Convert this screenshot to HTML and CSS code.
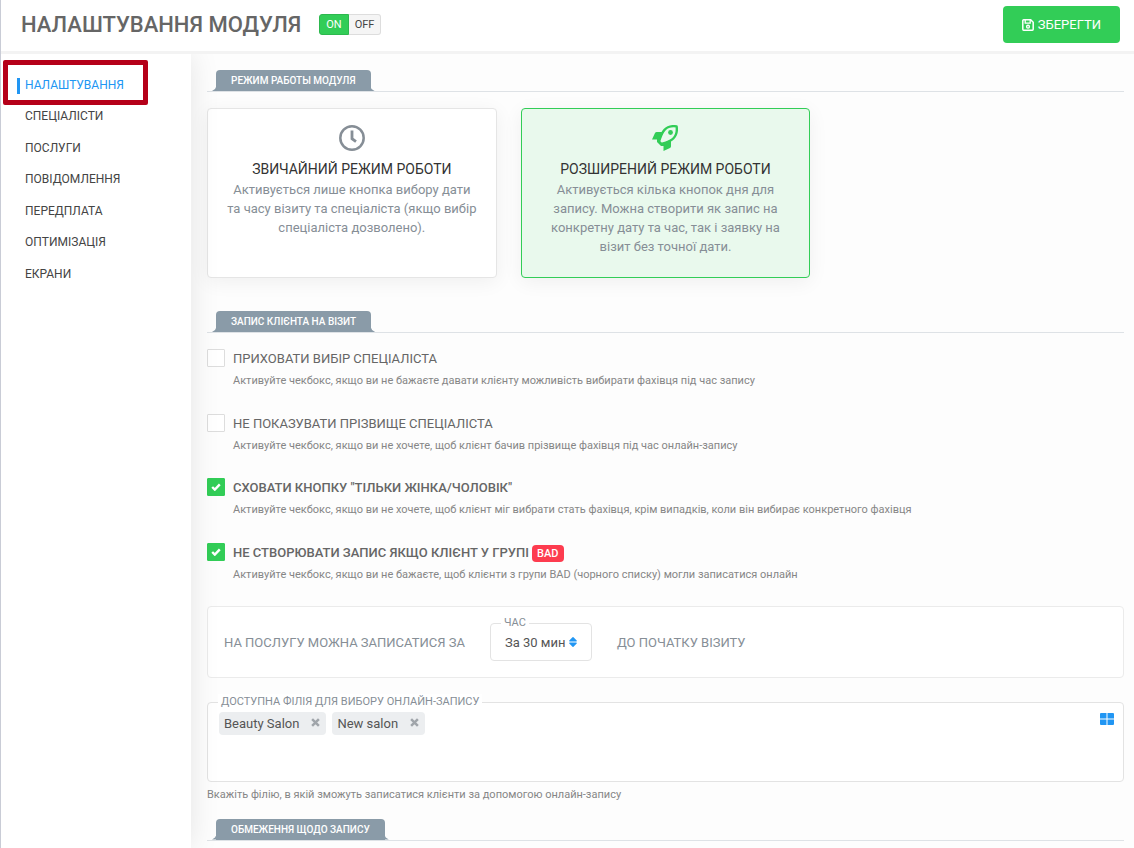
FILE: index.html
```html
<!DOCTYPE html>
<html lang="uk">

<head>
    <meta charset="UTF-8">
    <title>Налаштування модуля</title>
    <link rel="stylesheet" href="styles.css">
</head>

<body>
    <header class="header">
        <h1 class="header-title">НАЛАШТУВАННЯ МОДУЛЯ</h1>
        <div class="toggle">
            <button type="button" class="toggle-on" aria-pressed="true">ON</button>
            <button type="button" class="toggle-off" aria-pressed="false">OFF</button>
        </div>
        <button type="button" class="save">
            <svg class="save-icon" viewBox="0 0 12 12" aria-hidden="true">
                <path d="M1.7 .8h7l2.5 2.5v7a.9.9 0 0 1-.9.9H1.7a.9.9 0 0 1-.9-.9V1.7a.9.9 0 0 1 .9-.9z" fill="none" stroke="currentColor" stroke-width="1.5" />
                <path d="M3.2 1v3.2h5V1" fill="none" stroke="currentColor" stroke-width="1.3" />
                <circle cx="6" cy="7.7" r="1.4" fill="none" stroke="currentColor" stroke-width="1.4" />
            </svg>
            ЗБЕРЕГТИ
        </button>
    </header>

    <div class="layout">
        <!-- Side menu -->
        <nav class="menu">
            <a class="menu-link active" href="#settings">НАЛАШТУВАННЯ</a>
            <a class="menu-link" href="#specialists">СПЕЦІАЛІСТИ</a>
            <a class="menu-link" href="#services">ПОСЛУГИ</a>
            <a class="menu-link" href="#notifications">ПОВІДОМЛЕННЯ</a>
            <a class="menu-link" href="#prepayment">ПЕРЕДПЛАТА</a>
            <a class="menu-link" href="#optimization">ОПТИМІЗАЦІЯ</a>
            <a class="menu-link" href="#screens">ЕКРАНИ</a>
        </nav>

        <main class="content">
            <!-- Module mode -->
            <div class="section-head">
                <h2 class="section-title">РЕЖИМ РАБОТЫ МОДУЛЯ</h2>
            </div>
            <div class="modes">
                <label class="mode">
                    <input type="radio" class="mode-input" name="mode">
                    <svg class="mode-icon" viewBox="0 0 26 26" aria-hidden="true">
                        <circle cx="13" cy="13" r="11.7" fill="none" stroke="currentColor" stroke-width="2.5" />
                        <path d="M13 5.5v8.2l4 3" fill="none" stroke="currentColor" stroke-width="2.8" />
                    </svg>
                    <span class="mode-title">ЗВИЧАЙНИЙ РЕЖИМ РОБОТИ</span>
                    <span class="mode-text">Активується лише кнопка вибору дати та часу візиту та спеціаліста (якщо вибір спеціаліста дозволено).</span>
                </label>
                <label class="mode selected">
                    <input type="radio" class="mode-input" name="mode" checked>
                    <svg class="mode-icon" viewBox="0 0 26 26" aria-hidden="true">
                        <path d="M24.6 1.4C19.5.6 15.7 1.5 12.500 4.800C9.600 7.800 8.500 11.500 7 16.500l2.500 2.500C14.500 17.500 18.300 16.500 21.300 13.500C24.500 10.300 25.400 6.500 24.600 1.400z" fill="none" stroke="currentColor" stroke-width="2.4" stroke-linejoin="round" />
                        <circle cx="18.5" cy="7.5" r="2.4" fill="currentColor" />
                        <path d="M11.500 7H4.800a2 2 0 0 0-1.800 1L0 14.500h5V17l4 4h2.500V26l6.500-3a2 2 0 0 0 1-1.800V14.500L10 18.500 7.500 16z" fill="currentColor" />
                    </svg>
                    <span class="mode-title">РОЗШИРЕНИЙ РЕЖИМ РОБОТИ</span>
                    <span class="mode-text">Активується кілька кнопок дня для запису. Можна створити як запис на конкретну дату та час, так і заявку на візит без точної дати.</span>
                </label>
            </div>

            <!-- Client booking -->
            <div class="section-head">
                <h2 class="section-title">ЗАПИС КЛІЄНТА НА ВІЗИТ</h2>
            </div>
            <div class="checks">
                <div class="check">
                    <input type="checkbox" class="check-input" id="hideSpecialist">
                    <label class="check-label" for="hideSpecialist">ПРИХОВАТИ ВИБІР СПЕЦІАЛІСТА</label>
                    <p class="hint">Активуйте чекбокс, якщо ви не бажаєте давати клієнту можливість вибирати фахівця під час запису</p>
                </div>
                <div class="check">
                    <input type="checkbox" class="check-input" id="hideSurname">
                    <label class="check-label" for="hideSurname">НЕ ПОКАЗУВАТИ ПРІЗВИЩЕ СПЕЦІАЛІСТА</label>
                    <p class="hint">Активуйте чекбокс, якщо ви не хочете, щоб клієнт бачив прізвище фахівця під час онлайн-запису</p>
                </div>
                <div class="check">
                    <input type="checkbox" class="check-input" id="hideGender" checked>
                    <label class="check-label" for="hideGender">СХОВАТИ КНОПКУ "ТІЛЬКИ ЖІНКА/ЧОЛОВІК"</label>
                    <p class="hint">Активуйте чекбокс, якщо ви не хочете, щоб клієнт міг вибрати стать фахівця, крім випадків, коли він вибирає конкретного фахівця</p>
                </div>
                <div class="check">
                    <input type="checkbox" class="check-input" id="blockBad" checked>
                    <label class="check-label" for="blockBad">НЕ СТВОРЮВАТИ ЗАПИС ЯКЩО КЛІЄНТ У ГРУПІ <span class="badge">BAD</span></label>
                    <p class="hint">Активуйте чекбокс, якщо ви не бажаєте, щоб клієнти з групи BAD (чорного списку) могли записатися онлайн</p>
                </div>
            </div>

            <div class="time-box">
                <span>НА ПОСЛУГУ МОЖНА ЗАПИСАТИСЯ ЗА</span>
                <div class="field time-field">
                    <label class="field-label" for="time">ЧАС</label>
                    <select class="time-select" id="time">
                        <option>За 30 мин</option>
                    </select>
                    <svg class="sort-icon" viewBox="0 0 8 10" aria-hidden="true">
                        <path d="M3.500.3q.5-.5 1 0L7.700 3.600q.5.800-.4.800H.7q-.9 0-.4-.8zM.7 5.600h6.600q.9 0 .4.8L4.500 9.700q-.5.500-1 0L.3 6.400q-.5-.8.4-.8z" fill="currentColor" />
                    </svg>
                </div>
                <span>ДО ПОЧАТКУ ВІЗИТУ</span>
            </div>

            <div class="field branches">
                <span class="field-label">ДОСТУПНА ФІЛІЯ ДЛЯ ВИБОРУ ОНЛАЙН-ЗАПИСУ</span>
                <div class="chip">Beauty Salon
                    <button type="button" class="chip-remove" aria-label="Видалити Beauty Salon">
                        <svg viewBox="0 0 8 8" aria-hidden="true"><path d="M1 1l6 6M7 1L1 7" stroke="currentColor" stroke-width="2.2" /></svg>
                    </button>
                </div>
                <div class="chip">New salon
                    <button type="button" class="chip-remove" aria-label="Видалити New salon">
                        <svg viewBox="0 0 8 8" aria-hidden="true"><path d="M1 1l6 6M7 1L1 7" stroke="currentColor" stroke-width="2.2" /></svg>
                    </button>
                </div>
                <button type="button" class="all-branches" aria-label="Усі філії">
                    <svg viewBox="0 0 14 12" aria-hidden="true">
                        <path d="M1 0h5.5v5.5H0V1a1 1 0 0 1 1-1zM7.500 0H13a1 1 0 0 1 1 1v4.500H7.500zM0 6.500h6.500V12H1a1 1 0 0 1-1-1zM7.500 6.500H14V11a1 1 0 0 1-1 1H7.500z" fill="currentColor" />
                    </svg>
                </button>
            </div>
            <p class="hint branches-hint">Вкажіть філію, в якій зможуть записатися клієнти за допомогою онлайн-запису</p>

            <!-- Booking limits -->
            <div class="section-head">
                <h2 class="section-title">ОБМЕЖЕННЯ ЩОДО ЗАПИСУ</h2>
            </div>
        </main>
    </div>
</body>

</html>
```
FILE: styles.css
```css
*,
*::before,
*::after {
    box-sizing: border-box;
}

body {
    margin: 0;
    min-height: 100vh;
    display: flex;
    flex-direction: column;
    font-family: Roboto, Arial, sans-serif;
    font-size: 13px;
    color: #666;
    background-color: #fff;
    border-left: 1px solid #c9ccd6;
}

h1,
h2,
p {
    margin: 0;
}

button,
select {
    font-family: inherit;
    cursor: pointer;
}

svg {
    display: block;
}

/* Header */
.header {
    display: flex;
    align-items: center;
    min-height: 54px;
    padding: 0 14px 2px 20px;
    border-bottom: 3px solid #f3f3f3;
}

.header-title {
    font-size: 22px;
    font-weight: 500;
    line-height: 28px;
    color: #666;
}

.toggle {
    display: flex;
    margin-left: 18px;
}

.toggle button {
    height: 21px;
    padding: 0 6px;
    font-size: 11px;
    border: 1px solid #ddd;
}

.toggle .toggle-on {
    color: #fff;
    background-color: #32cd57;
    border-color: #2db84e;
    border-radius: 3px 0 0 3px;
}

.toggle .toggle-off {
    color: #444;
    background-color: #f5f5f5;
    border-left: 0;
    border-radius: 0 3px 3px 0;
}

.save {
    display: flex;
    align-items: center;
    gap: 4px;
    height: 37px;
    margin-left: auto;
    padding: 0 19px;
    font-size: 13px;
    color: #fff;
    background-color: #32cd57;
    border: 0;
    border-radius: 4px;
}

.save-icon {
    width: 12px;
    height: 12px;
}

.layout {
    flex: 1;
    display: flex;
}

/* Side menu */
.menu {
    flex: 0 0 190px;
    padding: 16px 0;
    background-color: #fff;
    box-shadow: 0 0 28px rgba(0, 0, 0, 0.1);
    clip-path: inset(0 -40px 0 0);
    z-index: 1;
}

.menu-link {
    display: block;
    position: relative;
    padding: 6px 24px;
    font-size: 12px;
    line-height: 1.62;
    color: #444;
    text-decoration: none;
}

.menu-link.active {
    color: #2196f3;
}

.menu-link.active::before {
    content: "";
    position: absolute;
    left: 16px;
    top: 8px;
    width: 3px;
    height: 16px;
    background-color: #2196f3;
}

/* Red frame around the current item */
.menu-link.active::after {
    content: "";
    position: absolute;
    left: 2px;
    top: -10px;
    width: 145px;
    height: 45px;
    border: 5px solid #b50019;
    border-radius: 2px;
}

/* Content */
.content {
    flex: 1;
    min-width: 0;
    padding: 16px 10px 7px 16px;
    background-color: #fdfdfd;
}

.section-head {
    display: flex;
    padding-left: 9px;
    margin-bottom: 16px;
    border-bottom: 1px solid #dee2e6;
}

.section-title {
    position: relative;
    padding: 0 15px;
    font-size: 10px;
    font-weight: 500;
    line-height: 21px;
    color: #fff;
    background-color: #8a9ba8;
    border-radius: 4px 4px 0 0;
}

.section-title::before {
    content: "";
    position: absolute;
    left: -4px;
    right: -4px;
    bottom: 0;
    height: 4px;
    background-color: #8a9ba8;
    clip-path: polygon(4px 0, calc(100% - 4px) 0, calc(100% - 3px) 2px, 100% 4px, 0 4px, 3px 2px);
}

.modes {
    display: grid;
    grid-template-columns: repeat(3, 1fr);
    gap: 24px;
    margin-bottom: 33px;
}

.mode {
    display: flex;
    flex-direction: column;
    align-items: center;
    min-height: 170px;
    padding: 16px 18px;
    text-align: center;
    color: #868e96;
    background-color: #fff;
    border: 1px solid #e5e5e5;
    border-radius: 4px;
    box-shadow: 0 4px 20px rgba(0, 0, 0, 0.06);
    cursor: pointer;
}

.mode.selected {
    background-color: #e9f9ed;
    border-color: #32cd57;
}

.mode-input {
    position: absolute;
    opacity: 0;
}

.mode-icon {
    width: 26px;
    height: 26px;
    margin-bottom: 8px;
}

.mode.selected .mode-icon {
    color: #32cd57;
}

.mode-title {
    font-size: 14px;
    line-height: 21px;
    color: #333;
}

.mode-text {
    font-size: 13px;
    line-height: 19px;
}

.checks {
    display: grid;
    gap: 24px;
    margin-bottom: 23px;
}

.check {
    display: grid;
    grid-template-columns: 18px 1fr;
    column-gap: 8px;
    row-gap: 4px;
}

.check-input {
    appearance: none;
    width: 18px;
    height: 18px;
    margin: 0;
    background-color: #fff;
    border: 1px solid #ddd;
    border-radius: 1px;
}

.check-input:checked {
    background: #32cd57 url("data:image/svg+xml,%3Csvg xmlns='http://www.w3.org/2000/svg' viewBox='0 0 10 8'%3E%3Cpath d='M1.2 4l2.6 2.6L8.8 1.4' fill='none' stroke='%23fff' stroke-width='2.4'/%3E%3C/svg%3E") center / 10px 8px no-repeat;
    border-color: #32cd57;
}

.check-label {
    justify-self: start;
    font-size: 13px;
    line-height: 20px;
}

.check-input:checked + .check-label {
    font-weight: 500;
}

.badge {
    display: inline-block;
    padding: 0 5px;
    font-size: 11px;
    line-height: 17px;
    color: #fff;
    background-color: #fd3c4f;
    border-radius: 4px;
}

.hint {
    font-size: 11px;
    line-height: 1.5;
    color: #868686;
}

.check .hint {
    grid-column: 2;
}

/* Fields with a label on the border */
.field {
    position: relative;
    background-color: #fff;
    border: 1px solid #e3e3e3;
    border-radius: 4px;
}

.field-label {
    position: absolute;
    top: -9px;
    left: 10px;
    padding: 0 3px;
    font-size: 11px;
    line-height: 16px;
    color: #868e96;
    background-color: #fff;
}

.time-box {
    display: flex;
    align-items: center;
    gap: 25px;
    margin-bottom: 24px;
    padding: 16px;
    color: #868e96;
    background-color: #fff;
    border: 1px solid #ebebeb;
    border-radius: 4px;
}

.time-field {
    display: flex;
    align-items: center;
}

.time-select {
    appearance: none;
    height: 36px;
    padding: 0 25px 0 14px;
    font-size: 13px;
    color: #555;
    background: none;
    border: 0;
}

.sort-icon {
    position: absolute;
    right: 14px;
    width: 8px;
    height: 10px;
    color: #2196f3;
    pointer-events: none;
}

.branches {
    display: flex;
    align-items: flex-start;
    gap: 6px;
    min-height: 80px;
    padding: 9px 9px 9px 11px;
}

.chip {
    display: flex;
    align-items: flex-start;
    gap: 12px;
    padding: 0 6px 0 5px;
    font-size: 13px;
    line-height: 23px;
    color: #555;
    background-color: #eceef0;
    border-radius: 4px;
}

.chip-remove {
    width: 9px;
    height: 20px;
    padding: 0;
    color: #a0a5aa;
    background: none;
    border: 0;
}

.all-branches {
    width: 14px;
    height: 14px;
    margin-left: auto;
    padding: 0;
    color: #2196f3;
    background: none;
    border: 0;
}

.branches-hint {
    margin: 5px 0 15px;
}

.section-head:last-child {
    margin-bottom: 0;
}
```
